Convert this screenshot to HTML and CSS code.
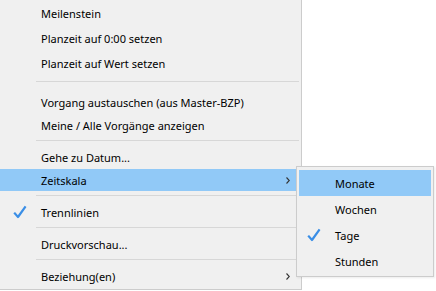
FILE: index.html
```html
<!DOCTYPE html>
<html lang="de">
<head>
  <meta charset="utf-8">
  <title>Kontextmenü</title>
  <link rel="stylesheet" href="styles.css">
</head>
<body>
  <div class="menu">
    <div class="group tall">
      <div class="item"><span class="check"></span><span class="label">Meilenstein</span></div>
      <div class="item"><span class="check"></span><span class="label">Planzeit auf 0:00 setzen</span></div>
      <div class="item"><span class="check"></span><span class="label">Planzeit auf Wert setzen</span></div>
    </div>
    <div class="sep wide"></div>
    <div class="group">
      <div class="item"><span class="check"></span><span class="label">Vorgang austauschen (aus Master-BZP)</span></div>
      <div class="item"><span class="check"></span><span class="label">Meine / Alle Vorgänge anzeigen</span></div>
    </div>
    <div class="sep"></div>
    <div class="group">
      <div class="item"><span class="check"></span><span class="label">Gehe zu Datum...</span></div>
      <div class="item active"><span class="check"></span><span class="label">Zeitskala</span>
        <span class="arrow"><svg width="4" height="7" viewBox="0 0 4 7"><path d="M0.5 0.5 L3.3 3.5 L0.5 6.5" fill="none" stroke="#333" stroke-width="1.1"/></svg></span>
      </div>
    </div>
    <div class="sep"></div>
    <div class="group">
      <div class="item">
        <span class="check"><svg width="14" height="14" viewBox="0 0 14 14"><path d="M1.2 7.6 L5 12 L12.6 1.4" fill="none" stroke="#3a8ee6" stroke-width="2.2" stroke-linejoin="round"/></svg></span>
        <span class="label">Trennlinien</span>
      </div>
    </div>
    <div class="sep"></div>
    <div class="group">
      <div class="item"><span class="check"></span><span class="label">Druckvorschau...</span></div>
    </div>
    <div class="sep"></div>
    <div class="group">
      <div class="item"><span class="check"></span><span class="label">Beziehung(en)</span>
        <span class="arrow"><svg width="4" height="7" viewBox="0 0 4 7"><path d="M0.5 0.5 L3.3 3.5 L0.5 6.5" fill="none" stroke="#333" stroke-width="1.1"/></svg></span>
      </div>
    </div>
  </div>

  <div class="submenu">
    <div class="subitem active"><span class="check"></span><span class="label">Monate</span></div>
    <div class="subitem"><span class="check"></span><span class="label">Wochen</span></div>
    <div class="subitem">
      <span class="check"><svg width="14" height="14" viewBox="0 0 14 14"><path d="M1.2 7.6 L5 12 L12.6 1.4" fill="none" stroke="#3a8ee6" stroke-width="2.2" stroke-linejoin="round"/></svg></span>
      <span class="label">Tage</span>
    </div>
    <div class="subitem"><span class="check"></span><span class="label">Stunden</span></div>
  </div>
</body>
</html>
```

FILE: styles.css
```css
body { margin: 0; width: 436px; height: 291px; background: #fff; position: relative; overflow: hidden; font-family: "Noto Sans", "Open Sans", sans-serif; font-size: 11px; color: #000; }

.menu { width: 301px; padding-top: 2px; background: #f0f0f0; border-right: 1px solid #cccccc; border-bottom: 1px solid #cccccc; height: 287px; }
.group { display: flex; flex-direction: column; gap: 1px; }
.group.tall { gap: 3px; }
.item { display: flex; align-items: center; height: 22px; }
.item.active { background: #91c9f7; }
.check { width: 41px; flex: none; display: flex; justify-content: center; padding-right: 2px; box-sizing: border-box; }
.label { flex: 1; white-space: nowrap; }
.arrow { width: 15px; flex: none; display: flex; }

.sep { height: 1px; background: #d7d7d7; margin: 4px 2px 5px 36px; }
.sep.wide { margin-top: 7px; margin-bottom: 9px; }

.submenu { position: absolute; left: 296px; top: 166px; width: 132px; padding: 3px 2px 2px; background: #f0f0f0; border: 1px solid #cccccc; box-shadow: 1px 1px 2px rgba(0,0,0,0.08); }
.subitem { display: flex; align-items: center; height: 26px; }
.subitem.active { background: #91c9f7; }
.subitem .check { width: 36px; padding-right: 6px; }
```
